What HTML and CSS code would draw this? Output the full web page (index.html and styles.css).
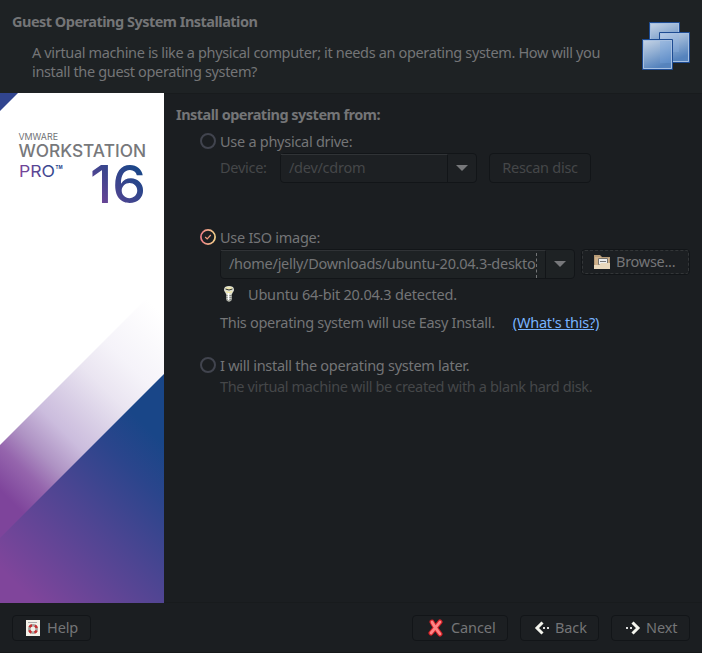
FILE: index.html
```html
<!DOCTYPE html>
<html lang="en">
<head>
<meta charset="utf-8">
<title>Guest Operating System Installation</title>
<link rel="stylesheet" href="styles.css">
</head>
<body>
<div class="wizard">
  <header class="header">
    <div class="heading">
      <h1>Guest Operating System Installation</h1>
      <p>A virtual machine is like a physical computer; it needs an operating system. How will you<br>install the guest operating system?</p>
    </div>
    <svg class="vm-icon" width="48" height="48" viewBox="0 0 48 48">
      <defs><linearGradient id="pane" x1="0" y1="0" x2=".4" y2="1"><stop stop-color="#c5d3e5"/><stop offset=".5" stop-color="#8fadd2"/><stop offset="1" stop-color="#5583bd"/></linearGradient></defs>
      <g fill="url(#pane)" stroke="#1d4b92">
        <path d="M7.500.5h30v30h-30z"/><path d="M8.500 1.500h28v28h-28z" stroke="#a7c0e1"/>
        <path d="M17.500 10.500h30v30h-30z"/><path d="M18.500 11.500h28v28h-28z" stroke="#a7c0e1"/>
        <path d="M19 12h18v18H19z" fill="#8fb4e4" fill-opacity=".3" stroke="none"/>
        <path d="M.5 17.500h30v30H.5z"/><path d="M1.500 18.500h28v28h-28z" stroke="#a7c0e1"/>
        <path d="M18 19h11v22H18z" fill="#73a5e5" fill-opacity=".3" stroke="none"/>
      </g>
    </svg>
  </header>
  <main class="main">
    <svg class="banner" width="164" height="510" viewBox="0 0 164 510">
      <defs>
        <linearGradient id="base" gradientUnits="userSpaceOnUse" x1="20" y1="495" x2="164" y2="351"><stop stop-color="#80459b"/><stop offset=".5" stop-color="#4c4592"/><stop offset=".8" stop-color="#2b458c"/><stop offset="1" stop-color="#194688"/></linearGradient>
        <linearGradient id="beam" gradientUnits="userSpaceOnUse" x1="10" y1="407" x2="179" y2="238"><stop stop-color="#7e449b"/><stop offset=".13" stop-color="#9565ad"/><stop offset=".23" stop-color="#ae92c3"/><stop offset=".36" stop-color="#cbbcdd"/><stop offset=".48" stop-color="#d9cfe6"/><stop offset=".61" stop-color="#eae5f1"/><stop offset=".75" stop-color="#f5f3f9"/><stop offset="1" stop-color="#fff"/></linearGradient>
        <linearGradient id="digits" gradientUnits="userSpaceOnUse" x1="92" y1="116" x2="136" y2="72"><stop stop-color="#80459b"/><stop offset=".5" stop-color="#44458f"/><stop offset="1" stop-color="#194688"/></linearGradient>
        <linearGradient id="edition" gradientUnits="userSpaceOnUse" x1="20" y1="84" x2="62" y2="70"><stop stop-color="#80459b"/><stop offset="1" stop-color="#194688"/></linearGradient>
      </defs>
      <path fill="#fff" d="M0 0h164v510H0z"/>
      <path fill="#31458f" d="M0 0h18L0 18z"/>
      <path fill="url(#beam)" d="M0 352L164 188v95L0 447z"/>
      <path fill="url(#base)" d="M0 445L164 281v229H0z"/>
      <g class="brand">
        <text x="18.500" y="46.700" font-size="9.300" fill="#707276" textLength="39.500" lengthAdjust="spacingAndGlyphs">VMWARE</text>
        <text x="18.500" y="64.300" font-size="17" font-weight="500" fill="#77787b" textLength="127.500" lengthAdjust="spacingAndGlyphs">WORKSTATION</text>
        <text x="19" y="84" font-size="16.500" fill="url(#edition)" textLength="36" lengthAdjust="spacingAndGlyphs">PRO</text>
        <text x="55.500" y="76" font-size="5" font-weight="700" fill="#29458f" textLength="7" lengthAdjust="spacingAndGlyphs">TM</text>
        <text x="90" y="110" font-size="52" font-weight="500" fill="url(#digits)" textLength="56" lengthAdjust="spacingAndGlyphs">16</text>
      </g>
    </svg>
    <section class="options">
      <h2>Install operating system from:</h2>
      <div class="radio-row physical"><i class="radio"></i><span>Use a physical drive:</span></div>
      <div class="device-row">
        <span class="device-label">Device:</span>
        <div class="combo device"><span class="entry"><span>/dev/cdrom</span></span><span class="arrow"></span></div>
        <div class="button rescan"><span>Rescan disc</span></div>
      </div>
      <div class="radio-row iso">
        <svg width="16" height="16" viewBox="0 0 16 16" fill="none"><defs><linearGradient id="ring"><stop stop-color="#ee7d86"/><stop offset="1" stop-color="#f3d18a"/></linearGradient></defs><circle cx="8" cy="8" r="7.100" stroke="url(#ring)" stroke-width="1.700"/><path d="M5.200 8l2 2 3.600-4" stroke="#ed9a7e" stroke-width="1.200"/></svg>
        <span>Use ISO image:</span>
      </div>
      <div class="iso-row">
        <div class="combo path"><span class="entry"><span>/home/jelly/Downloads/ubuntu-20.04.3-deskto</span><i class="clip-mark"></i></span><span class="arrow"></span></div>
        <div class="button browse">
          <svg width="16" height="16" viewBox="0 0 16 16"><path fill="#b79b77" d="M0 1h6l2 2h8v12H0z"/><path fill="#d0b18a" d="M1 3h6l1 1h7v10H1z"/><path fill="#eee" stroke="#77736c" d="M4.500 4.500h9v6h-9z"/><path stroke="#777" d="M6 7.500h6"/><path fill="#ead9bd" d="M0 11h5l2-2h9v6H0z"/></svg>
          <span>Browse...</span>
        </div>
      </div>
      <div class="detected">
        <svg width="12" height="16" viewBox="0 0 12 16"><path fill="#dedfd2" d="M2 1Q6-1 10 1Q12 4 10 6L8.500 9v5L7 15.500H5L3.500 14V9L2 6Q0 4 2 1z"/><path fill="none" stroke="#f5eaa0" stroke-width="1.200" d="M3 1.700q3 1 6 0M3 5.500q3 2 6 0"/><path fill="none" stroke="#34362c" d="M2.500 3q3.500 2 7 0"/><path fill="#888a86" d="M3.500 9h5v5.500h-5z"/><path stroke="#c8cac5" d="M3.500 10.500h5m-5 2h5"/><path stroke="#fff" stroke-width="1.500" d="M5.500 7v7"/></svg>
        <span>Ubuntu 64-bit 20.04.3 detected.</span>
      </div>
      <div class="easy"><span class="easy-text">This operating system will use Easy Install.</span><a>(What's this?)</a></div>
      <div class="radio-row later"><i class="radio"></i><span>I will install the operating system later.</span></div>
      <div class="blank"><span>The virtual machine will be created with a blank hard disk.</span></div>
    </section>
  </main>
  <footer class="footer">
    <div class="button help"><svg width="14" height="16" viewBox="0 0 14 16"><path fill="#f3f1e9" d="M0 0h14v16H0z"/><path stroke="#aaa" d="M2 2.500h9"/><circle cx="7" cy="9" r="3.700" fill="none" stroke="#a8a4a0" stroke-width="2.500"/><circle cx="7" cy="9" r="3.900" fill="none" stroke="#c62d30" stroke-width="2.400" stroke-dasharray="3 3.126" stroke-dashoffset="-1.500"/></svg><span>Help</span></div>
    <div class="spacer"></div>
    <div class="button cancel"><svg width="16" height="18" viewBox="0 0 16 18"><path d="M4 3q2 4 8 12M12 3Q8 8 3 14" fill="none" stroke="#d41f26" stroke-width="5" stroke-linecap="round"/><path d="M4 3q2 4 8 12M12 3Q8 8 3 14" fill="none" stroke="#ff8585" stroke-width="2.800" stroke-linecap="round"/></svg><span>Cancel</span></div>
    <div class="button back"><svg width="16" height="14" viewBox="0 0 16 14"><path d="M8.500 1.500L3 7l5.500 5.500" fill="none" stroke="#f4f5ee" stroke-width="3"/><path fill="#ddd" d="M9 6h2v2H9zm4 0h2v2h-2z"/></svg><span>Back</span></div>
    <div class="button next"><svg width="16" height="14" viewBox="0 0 16 14"><path d="M7.500 1.500L13 7l-5.500 5.500" fill="none" stroke="#f4f5ee" stroke-width="3"/><path fill="#ddd" d="M1 6h2v2H1zm4 0h2v2H5z"/></svg><span>Next</span></div>
  </footer>
</div>
</body>
</html>
```
FILE: styles.css
```css
* { box-sizing: border-box; }
body { margin: 0; background: #1b1e21; color: #747577; font: 14.500px/19px "Noto Sans", sans-serif; letter-spacing: -.27px; }
span, h1, h2, p, a { white-space: nowrap; }
svg { display: block; flex: none; }
h1, h2, p { margin: 0; }
.wizard { width: 702px; height: 653px; display: flex; flex-direction: column; box-shadow: inset 0 -1px #151719; }
.header { flex: none; height: 93px; display: flex; justify-content: space-between; padding: 11px 12px 0; background: #1e2224; }
h1, h2 { font-size: 14.500px; line-height: 20px; font-weight: 700; letter-spacing: -.51px; }
.heading p { margin: 12px 0 0 20px; letter-spacing: -.35px; }
.vm-icon { margin-top: 11px; }
.main { flex: none; height: 510px; display: flex; }
.options { flex: 1; padding: 11px 12px 0; border-top: 1px solid #181b1d; border-bottom: 1px solid #181b1d; }
.options h2 { line-height: 19px; }
.radio-row { display: flex; gap: 4px; margin-left: 24px; height: 18px; align-items: center; }
.radio { width: 16px; height: 16px; border: 2px solid #41444e; border-radius: 50%; }
.physical { margin-top: 8px; }
.device-row { display: flex; height: 30px; margin: 3px 0 0 44px; align-items: center; color: #454749; }
.device-label { width: 60px; margin-top: -2px; }
.combo { height: 30px; display: flex; border: 1px solid #121518; border-radius: 4px; background: #1d2023; }
.entry { flex: 1; min-width: 0; display: flex; align-items: center; position: relative; padding: 0 0 2px 8px; border-top: 1px solid #303336; border-right: 1px solid #121518; }
.arrow { width: 28px; display: grid; place-items: center; }
.arrow::before { content: ""; border: 6px solid transparent; border-top-color: #77787b; border-bottom: 0; }
.device { width: 197px; }
.button { display: flex; align-items: center; border: 1px solid #121518; border-radius: 4px; background: #1c1f22; }
.rescan { width: 102px; height: 30px; margin-left: 12px; padding-bottom: 2px; justify-content: center; }
.iso { margin-top: 45px; }
.iso-row { display: flex; margin: 3px 0 0 44px; }
.path { width: 355px; background: #1e2224; }
.clip-mark { position: absolute; right: 8px; top: 2px; bottom: 0; border-right: 1px dashed #727476; }
.browse { width: 109px; height: 26px; margin-left: 6px; gap: 6px; padding: 0 0 1px 12px; outline: 1px dashed #333638; outline-offset: -2px; }
.browse svg { margin-top: 1px; }
.detected { display: flex; height: 20px; gap: 13px; align-items: center; margin: 5px 0 0 47px; letter-spacing: -.2px; }
.easy { display: flex; gap: 18px; margin: 9px 0 0 44px; letter-spacing: -.3px; }
.easy a { color: #78b3ff; text-decoration: underline; letter-spacing: -.22px; }
.later { margin-top: 24px; }
.blank { margin: 3px 0 0 44px; color: #454749; letter-spacing: -.36px; }
.footer { flex: 1; display: flex; align-items: flex-start; padding: 12px 12px 0; letter-spacing: -.1px; }
.footer .button { height: 26px; padding-bottom: 1px; }
.spacer { flex: 1; }
.help { width: 79px; gap: 7px; padding-left: 13px; }
.cancel { width: 96px; gap: 7px; padding-left: 15px; margin-right: 12px; }
.back, .next { width: 79px; gap: 5px; padding-left: 13px; }
.back { margin-right: 12px; }
.brand { font-family: "Inter", sans-serif; letter-spacing: 0; }
```
